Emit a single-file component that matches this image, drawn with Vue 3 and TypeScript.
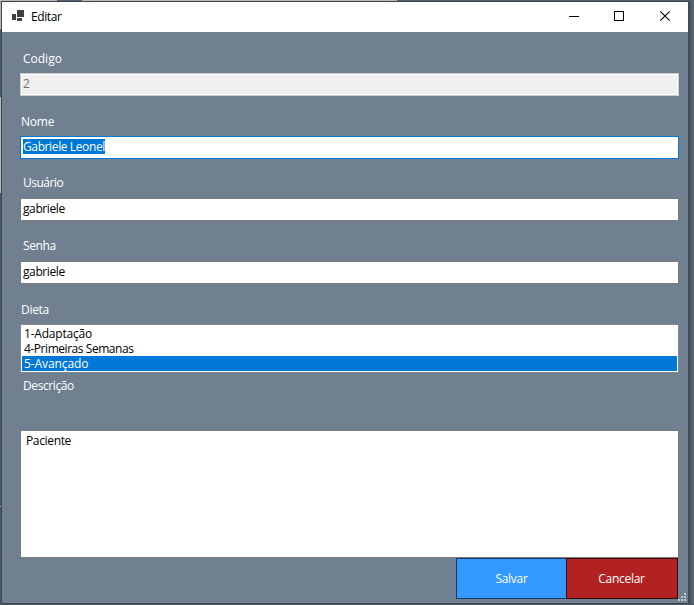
<script setup lang="ts">
import { ref } from 'vue'

const diets = ['1-Adaptação', '4-Primeiras Semanas', '5-Avançado']
const selected = ref(2)
</script>

<template>
  <div class="desktop">
    <div class="top-strip"><i class="light"></i><i class="tick"></i><i class="dark"></i><i class="pale"></i></div>
    <div class="middle">
      <div class="left-strip"><i class="s1"></i><i class="s2"></i><i class="s3"></i><i class="s4"></i><i class="s5"></i><i class="s6"></i></div>
      <section class="window">
        <header class="titlebar">
          <svg class="app-icon" width="13" height="12" viewBox="0 0 13 12" shape-rendering="crispEdges">
            <path d="M5 0h7v7H5zM0 4h4v6H0zM5 8h5v3H5z" fill="#404040" />
          </svg>
          <span class="title">Editar</span>
          <svg class="controls" width="104" height="12" viewBox="0 0 104 12">
            <path d="M0 6.5h10M45.5 1.5h9v9h-9z" fill="none" stroke="#000" shape-rendering="crispEdges" />
            <path d="M91.3 1.3l9.4 9.4M100.7 1.3l-9.4 9.4" fill="none" stroke="#000" stroke-width="1.1" />
          </svg>
        </header>
        <main class="form">
          <label class="label l-code">Codigo</label>
          <div class="field disabled"><span>2</span></div>
          <label class="label l-name">Nome</label>
          <div class="field focused"><span class="selection">Gabriele Leonel</span></div>
          <label class="label l-user">Usuário</label>
          <div class="field plain"><span>gabriele</span></div>
          <label class="label l-pass">Senha</label>
          <div class="field plain"><span>gabriele</span></div>
          <label class="label l-diet">Dieta</label>
          <ul class="list">
            <li v-for="(d, i) in diets" :key="d" :class="{ active: i === selected }" @click="selected = i"><span>{{ d }}</span></li>
          </ul>
          <label class="label l-desc">Descrição</label>
          <div class="area"><span>Paciente</span></div>
          <footer class="actions">
            <button class="btn save">Salvar</button>
            <button class="btn cancel">Cancelar</button>
          </footer>
        </main>
        <svg class="grip" width="8" height="8" viewBox="0 0 8 8" shape-rendering="crispEdges">
          <path d="M6 0h2v2H6zM3 3h2v2H3zM6 3h2v2H6zM0 6h2v2H0zM3 6h2v2H3zM6 6h2v2H6z" fill="#c3c6ca" />
        </svg>
      </section>
      <div class="right-strip"></div>
    </div>
  </div>
</template>

<style>
body {
  margin: 0;
  overflow: hidden;
  background: #48545e;
}
</style>

<style scoped>
.desktop {
  width: 694px;
  height: 605px;
  display: flex;
  flex-direction: column;
  background: #48545e;
  font-family: "Open Sans", "Noto Sans", sans-serif;
  font-size: 12px;
  letter-spacing: -0.3px;
  line-height: 16px;
}
.top-strip {
  height: 1px;
  display: flex;
  background: #55616b;
}
.top-strip i { height: 1px; }
.top-strip .light { width: 57px; background: #b9b7b4; }
.top-strip .tick { width: 1px; background: #555; }
.top-strip .dark { width: 24px; background: #52616c; }
.top-strip .pale { width: 315px; background: #bcbab7; }
.middle { display: flex; height: 603px; }
.left-strip {
  width: 1px;
  display: flex;
  flex-direction: column;
  background: #4c5963;
}
.s1 { height: 28px; background: #b7b7b7; }
.s2 { height: 68px; background: #4c5963; }
.s3 { height: 96px; background: #b7b7b7; }
.s4 { height: 313px; background: #4c5963; }
.s5 { height: 1px; background: #aaa; }
.s6 { flex: 1; background: #4c5963; }
.right-strip { flex: 1; background: linear-gradient(to right, #44505a, #5b6874); }
.window {
  box-sizing: border-box;
  position: relative;
  width: 688px;
  height: 603px;
  border: 1px solid #3d464e;
  background: #708090;
}
.titlebar {
  height: 30px;
  box-sizing: border-box;
  display: flex;
  align-items: center;
  padding: 0 15px 0 10px;
  background: #fff;
  color: #000;
}
.app-icon { margin-top: -2px; }
.title { margin-left: 6px; flex: 1; letter-spacing: -0.4px; }
.controls { margin-top: -2px; }
.form {
  display: flex;
  flex-direction: column;
  padding: 19px 9px 0 18px;
}
.label { height: 16px; color: #fff; }
.l-code { padding-left: 3px; margin-bottom: 6px; letter-spacing: 0; }
.l-name { padding-left: 1px; margin: 18px 0 6px; letter-spacing: -0.2px; }
.l-user { padding-left: 3px; margin: 16px 0 7px; letter-spacing: -0.5px; }
.l-pass { padding-left: 3px; margin: 17px 0 7px; letter-spacing: -0.4px; }
.l-diet { padding-left: 1px; margin: 18px 0 6px; }
.l-desc { padding-left: 3px; margin: 5px 0 36px; letter-spacing: -0.4px; }
.field {
  box-sizing: border-box;
  height: 23px;
  border: 1px solid #7a7a7a;
  background: #fff;
  color: #000;
  padding: 2px;
}
.field span { display: block; width: max-content; height: 15px; line-height: 16px; }
.field.plain { letter-spacing: -0.4px; }
.field.disabled { border-color: #ccc; background: #f0f0f0; box-shadow: inset 0 0 0 1px #fff; color: #6d6d6d; }
.field.focused { border-color: #0078d7; }
.field .selection { background: #0078d7; color: #fff; letter-spacing: -0.38px; }
.list {
  box-sizing: border-box;
  height: 49px;
  margin: 0;
  padding: 1px;
  border: 1px solid #828790;
  background: #fff;
  list-style: none;
  color: #000;
}
.list li { height: 15px; line-height: 15px; padding-left: 2px; letter-spacing: -0.2px; }
.list li span { display: block; height: 15px; }
.list li:nth-child(2) { letter-spacing: -0.45px; }
.list li:nth-child(3) { letter-spacing: -0.1px; }
.list li.active { background: #0078d7; color: #fff; }
.area {
  box-sizing: border-box;
  height: 128px;
  border: 1px solid #7a7a7a;
  background: #fff;
  color: #000;
  padding: 2px 5px;
  letter-spacing: -0.35px;
}
.actions { display: flex; justify-content: flex-end; padding-right: 1px; }
.btn {
  box-sizing: border-box;
  height: 41px;
  margin: 0;
  padding: 0;
  border: 1px solid #173b62;
  color: #fff;
  font: inherit;
  letter-spacing: inherit;
}
.save { width: 110px; background: #3399ff; border-right: 0; }
.cancel { width: 112px; padding-right: 1px; background: #b22222; border-color: #330d10; }
.grip { position: absolute; right: 2px; bottom: 2px; }
</style>
